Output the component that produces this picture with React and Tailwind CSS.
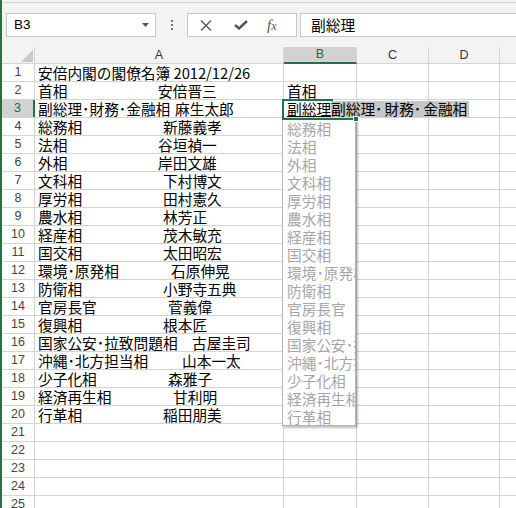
import React from "react";

const rows = [
  ["安倍内閣の閣僚名簿 2012/12/26", "", ""],
  ["首相", "安倍晋三", "w-[120px]"],
  ["副総理･財務･金融相", "麻生太郎", "w-[137px]"],
  ["総務相", "新藤義孝", "w-[125px]"],
  ["法相", "谷垣禎一", "w-[120px]"],
  ["外相", "岸田文雄", "w-[120px]"],
  ["文科相", "下村博文", "w-[125px]"],
  ["厚労相", "田村憲久", "w-[125px]"],
  ["農水相", "林芳正", "w-[125px]"],
  ["経産相", "茂木敏充", "w-[125px]"],
  ["国交相", "太田昭宏", "w-[125px]"],
  ["環境･原発相", "石原伸晃", "w-[133px]"],
  ["防衛相", "小野寺五典", "w-[125px]"],
  ["官房長官", "菅義偉", "w-[130px]"],
  ["復興相", "根本匠", "w-[125px]"],
  ["国家公安･拉致問題相", "古屋圭司", "w-[154px]"],
  ["沖縄･北方担当相", "山本一太", "w-[144px]"],
  ["少子化相", "森雅子", "w-[130px]"],
  ["経済再生相", "甘利明", "w-[135px]"],
  ["行革相", "稲田朋美", "w-[125px]"],
];

const suggestions = rows.slice(3).map((r) => r[0]);
const lineNumbers = Array.from({ length: 25 }, (_, i) => i + 1);

const jp = { fontFamily: '"Noto Sans CJK JP", "Noto Sans", sans-serif' };
const latin = { fontFamily: '"Liberation Sans", Arial, sans-serif' };

// half-width dots; the in-cell editor draws them a little wider
function Dotted({ text, wide }) {
  const parts = text.split("･");
  return parts.map((p, i) => (
    <React.Fragment key={i}>
      {p}
      {i < parts.length - 1 && <span className={wide ? "mr-[2px]" : ""}>･</span>}
    </React.Fragment>
  ));
}

function Toolbar() {
  return (
    <div className="mt-[2px] h-[40px] border-t border-[#d4d4d4] flex items-start pt-[10px]">
      <div className="ml-[4px] w-[150px] h-[24px] bg-white border border-[#c6c6c6] flex items-center justify-between pl-[7px] pr-[6px]">
        <span className="text-[13.5px] text-black" style={latin}>B3</span>
        <svg width="7" height="4" viewBox="0 0 7 4">
          <path d="M0 0 L7 0 L3.5 4 Z" fill="#555" />
        </svg>
      </div>
      <div className="w-[31px] h-[24px] flex flex-col items-center justify-center gap-[2px]">
        <span className="w-[2px] h-[2px] bg-[#777]" />
        <span className="w-[2px] h-[2px] bg-[#777]" />
        <span className="w-[2px] h-[2px] bg-[#777]" />
      </div>
      <div className="w-[110px] h-[24px] bg-white border border-[#c6c6c6] flex items-center">
        <svg className="ml-[12px]" width="12" height="11" viewBox="0 0 12 11">
          <path d="M1 0.5 L11 10.5 M11 0.5 L1 10.5" stroke="#555" strokeWidth="1.4" fill="none" />
        </svg>
        <svg className="ml-[22px]" width="14" height="10" viewBox="0 0 14 10">
          <path d="M1 5 L5 8.5 L13 1" stroke="#555" strokeWidth="2.4" fill="none" />
        </svg>
        <span
          className="ml-[19px] text-[15px] italic text-[#555] leading-none"
          style={{ fontFamily: '"Liberation Serif", serif' }}
        >
          f<span className="text-[12px]">x</span>
        </span>
      </div>
      <div className="ml-[3px] flex-1 h-[24px] bg-white border border-r-0 border-[#c6c6c6] flex items-center pl-[10px]">
        <span className="text-[14.7px] text-black" style={jp}>副総理</span>
      </div>
    </div>
  );
}

function ColumnHeaders() {
  const head = "h-[17px] border-r border-b border-[#d4d4d4] flex items-center justify-center text-[12.5px] text-[#333]";
  return (
    <div className="h-[22px] flex items-end" style={latin}>
      <div className="w-[33px] h-[17px] border-r border-b border-[#d4d4d4] flex items-end justify-end pr-[1px] pb-[1px]">
        <svg width="12" height="12" viewBox="0 0 12 12">
          <path d="M12 0 L12 12 L0 12 Z" fill="#c8c8c8" />
        </svg>
      </div>
      <div className={`w-[249px] ${head}`}>A</div>
      <div className="w-[73px] h-[17px] border-r border-[#d4d4d4] border-b-2 border-b-[#217346] bg-[#d2d2d2] flex items-center justify-center text-[12.5px] text-[#1d6b40]">
        B
      </div>
      <div className={`w-[72px] ${head}`}>C</div>
      <div className={`w-[71px] ${head}`}>D</div>
      <div className="flex-1 h-[17px] border-b border-[#d4d4d4]" />
    </div>
  );
}

function Row({ n }) {
  const data = rows[n - 1];
  const active = n === 3;
  const cell = "h-full border-r border-[#d4d4d4]";
  return (
    <div className="h-[18px] flex border-b border-[#d4d4d4] bg-white">
      <div
        className={
          active
            ? "w-[33px] h-full bg-[#d2d2d2] border-r-2 border-[#217346] flex items-center justify-center text-[12.5px] text-[#1d6b40]"
            : "w-[33px] h-full border-r border-[#d4d4d4] flex items-center justify-center text-[12.5px] text-[#444]"
        }
        style={latin}
      >
        {n}
      </div>
      <div className={`w-[249px] ${cell} pl-[3px] flex items-center whitespace-nowrap text-[14.7px] leading-[17px] text-black`} style={jp}>
        {data && (
          <>
            <span className={data[2] ? `inline-block ${data[2]}` : ""}>
              <Dotted text={data[0]} />
            </span>
            {data[1] && <span>{data[1]}</span>}
          </>
        )}
      </div>
      <div className={`w-[73px] ${cell} pl-[3px] flex items-center whitespace-nowrap text-[14.7px] leading-[17px] text-black`} style={jp}>
        {n === 2 && <span>首相</span>}
        {active && <span className="border-b border-black leading-[15px]">副総理</span>}
      </div>
      <div className={`w-[72px] ${cell}`} />
      <div className={`w-[71px] ${cell}`} />
      <div className="flex-1" />
    </div>
  );
}

export default function App() {
  return (
    <div className="relative w-[516px] h-[508px] overflow-hidden bg-[#f3f3f3] border-l-2 border-[#217346]">
      <Toolbar />
      <ColumnHeaders />
      <div className="bg-white">
        {lineNumbers.map((n) => (
          <Row key={n} n={n} />
        ))}
      </div>

      {/* active cell frame */}
      <div className="absolute left-[280px] top-[99px] w-[75px] h-[21px] border-l-2 border-b-2 border-[#217346] z-20" />
      <div className="absolute left-[280px] top-[99px] w-[51px] h-[2px] bg-[#217346] z-20" />
      <div className="absolute left-[351px] top-[116px] w-[6px] h-[6px] bg-[#217346] border border-white z-30" />

      {/* autocomplete suggestion */}
      <div
        className="absolute left-[329px] top-[101px] h-[16px] bg-[#c6c6c6] pr-[2px] flex items-center whitespace-nowrap text-[14.7px] leading-[16px] text-black z-10"
        style={jp}
      >
        <Dotted text="副総理･財務･金融相" wide />
      </div>

      {/* pick list */}
      <div className="absolute left-[280px] top-[118px] w-[74px] h-[308px] bg-white border border-[#b4b4b4] shadow-[2px_2px_2px_rgba(0,0,0,0.25)] overflow-hidden z-10" style={jp}>
        {suggestions.map((s, i) => (
          <div key={i} className="h-[18px] pl-[4px] flex items-center whitespace-nowrap text-[14.7px] leading-[17px] text-[#a6a6a6]">
            <Dotted text={s} />
          </div>
        ))}
      </div>
    </div>
  );
}
